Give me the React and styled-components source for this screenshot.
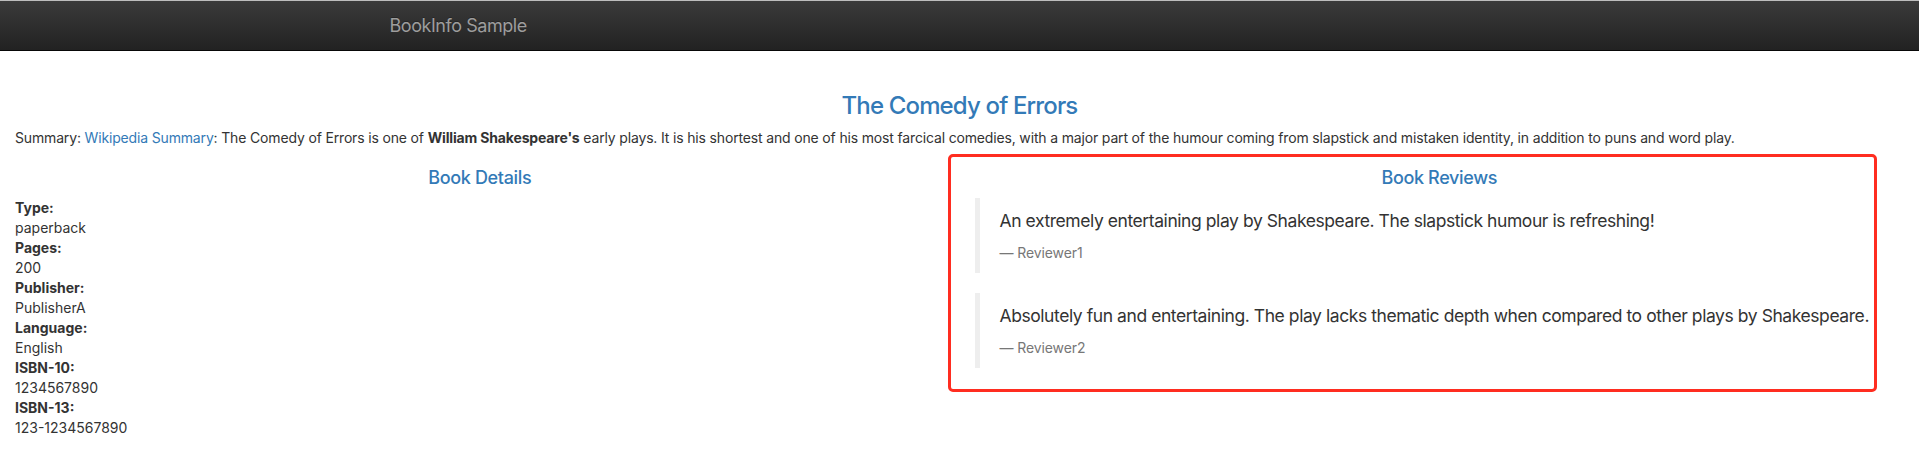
import React from "react";
import styled, { createGlobalStyle } from "styled-components";

const GlobalStyle = createGlobalStyle`
  html, body {
    margin: 0;
    padding: 0;
    background: #fff;
  }
  body {
    font-family: Inter, "Noto Sans", "Liberation Sans", sans-serif;
    font-size: 14px;
    line-height: 20px;
    color: #333;
  }
  * {
    box-sizing: border-box;
  }
`;

const Navbar = styled.nav`
  height: 51px;
  background: linear-gradient(to bottom, #3a3a3a 0%, #222 100%);
  border-top: 1px solid #bdbdbd;
  border-bottom: 1px solid #080808;
`;

const NavContainer = styled.div`
  width: 1170px;
  margin: 0 auto;
  height: 100%;
  display: flex;
  align-items: center;
`;

const Brand = styled.a`
  padding: 0 15px;
  font-size: 18px;
  letter-spacing: -0.45px;
  color: #9d9d9d;
  text-decoration: none;
  text-shadow: 0 -1px 0 rgba(0, 0, 0, 0.25);
`;

const Main = styled.main`
  padding: 0 15px;
`;

const Title = styled.h3`
  margin: 42px 0 0;
  font-size: 24px;
  line-height: 26px;
  font-weight: 500;
  letter-spacing: -0.85px;
  text-align: center;
  color: #337ab7;
`;

const Summary = styled.p`
  margin: 9px 0 0;
  letter-spacing: -0.16px;
`;

const Link = styled.a`
  color: #337ab7;
  text-decoration: none;
`;

const Row = styled.div`
  display: grid;
  grid-template-columns: 1fr 1fr;
  margin: 0 -15px;
  padding-top: 20px;
`;

const Column = styled.section`
  position: relative;
  padding: 0 15px;
`;

const ColumnTitle = styled.h4`
  margin: 0 0 10px;
  font-size: 18px;
  line-height: 20px;
  font-weight: 500;
  letter-spacing: -0.35px;
  text-align: center;
  color: #337ab7;
`;

const DetailList = styled.dl`
  margin: 0;
`;

const Term = styled.dt`
  font-weight: 700;
`;

const Value = styled.dd`
  margin: 0;
`;

const Quote = styled.blockquote`
  margin: 0 0 20px;
  padding: 10px 20px;
  border-left: 5px solid #eee;
  font-size: 17.5px;
  line-height: 25px;
  letter-spacing: -0.43px;
`;

const QuoteText = styled.p`
  margin: 0 0 10px;
  white-space: nowrap;
`;

const QuoteFooter = styled.footer`
  font-size: 14px;
  line-height: 20px;
  letter-spacing: -0.1px;
  color: #777;

  &::before {
    content: "\\2014 \\00A0";
  }
`;

const Highlight = styled.div`
  position: absolute;
  left: -12px;
  top: -14px;
  width: 929px;
  height: 238px;
  border: 3px solid #ff2d20;
  border-radius: 5px;
  pointer-events: none;
`;

const details = [
  ["Type:", "paperback"],
  ["Pages:", "200"],
  ["Publisher:", "PublisherA"],
  ["Language:", "English"],
  ["ISBN-10:", "1234567890"],
  ["ISBN-13:", "123-1234567890"],
];

const reviews = [
  {
    text: "An extremely entertaining play by Shakespeare. The slapstick humour is refreshing!",
    author: "Reviewer1",
  },
  {
    text: "Absolutely fun and entertaining. The play lacks thematic depth when compared to other plays by Shakespeare.",
    author: "Reviewer2",
  },
];

export default function App() {
  return (
    <>
      <GlobalStyle />
      <Navbar>
        <NavContainer>
          <Brand href="#">BookInfo Sample</Brand>
        </NavContainer>
      </Navbar>
      <Main>
        <Title>The Comedy of Errors</Title>
        <Summary>
          Summary: <Link href="#">Wikipedia Summary</Link>: The Comedy of Errors is one of{" "}
          <b>William Shakespeare's</b> early plays. It is his shortest and one of his most farcical
          comedies, with a major part of the humour coming from slapstick and mistaken identity, in
          addition to puns and word play.
        </Summary>
        <Row>
          <Column>
            <ColumnTitle>Book Details</ColumnTitle>
            <DetailList>
              {details.map(([label, value]) => (
                <React.Fragment key={label}>
                  <Term>{label}</Term>
                  <Value>{value}</Value>
                </React.Fragment>
              ))}
            </DetailList>
          </Column>
          <Column>
            <Highlight />
            <ColumnTitle>Book Reviews</ColumnTitle>
            {reviews.map((r) => (
              <Quote key={r.author}>
                <QuoteText>{r.text}</QuoteText>
                <QuoteFooter>{r.author}</QuoteFooter>
              </Quote>
            ))}
          </Column>
        </Row>
      </Main>
    </>
  );
}
